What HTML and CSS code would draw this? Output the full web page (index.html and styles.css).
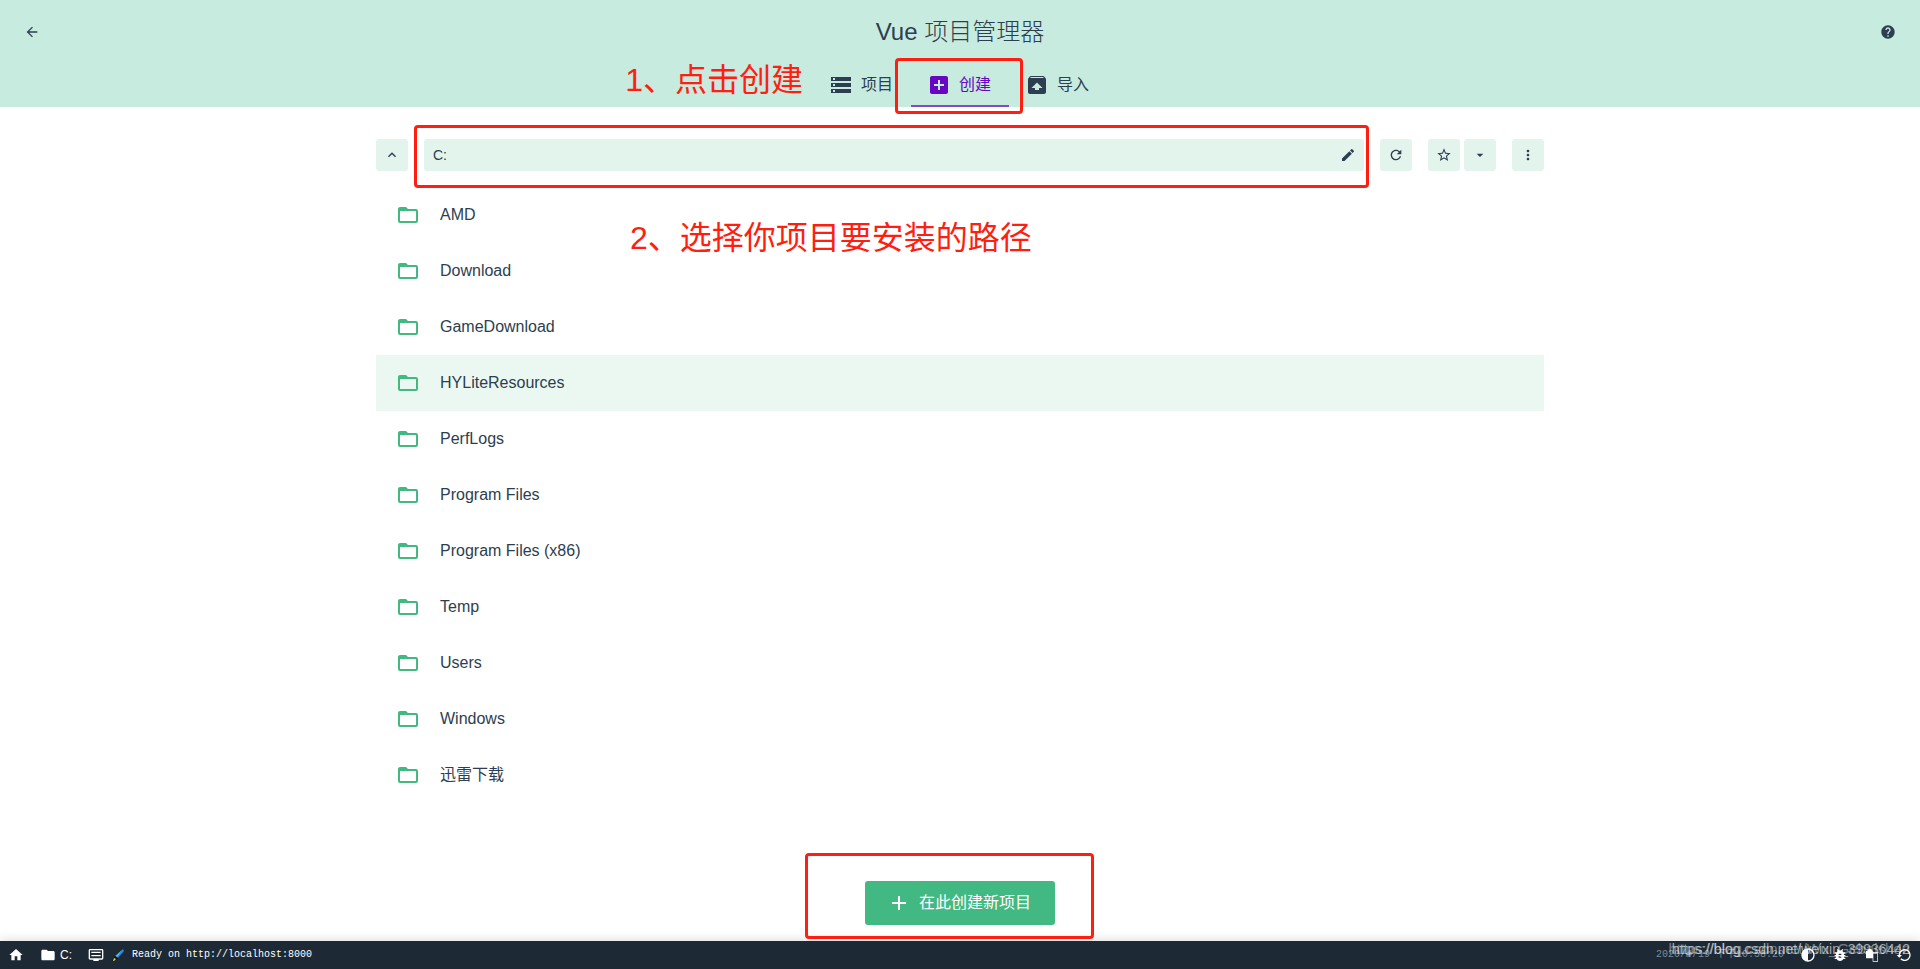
FILE: index.html
```html
<!DOCTYPE html>
<html lang="zh-CN">
<head>
<meta charset="utf-8">
<title>Vue 项目管理器</title>
<link rel="stylesheet" href="styles.css">
</head>
<body>
<div class="app">
  <header class="header">
    <div class="header-top">
      <button class="icon-button" type="button" aria-label="返回"><svg class="icon-small" viewBox="0 0 24 24"><path d="M20 11H7.83l5.59-5.59L12 4l-8 8 8 8 1.41-1.41L7.83 13H20v-2z"/></svg></button>
      <h1 class="title">Vue 项目管理器</h1>
      <button class="icon-button" type="button" aria-label="帮助"><svg class="icon-small" viewBox="0 0 24 24"><path d="M12 2C6.48 2 2 6.48 2 12s4.48 10 10 10 10-4.48 10-10S17.52 2 12 2zm1 17h-2v-2h2v2zm2.07-7.75l-.9.92C13.45 12.9 13 13.5 13 15h-2v-.5c0-1.1.45-2.1 1.17-2.83l1.24-1.26c.37-.36.59-.86.59-1.41 0-1.1-.9-2-2-2s-2 .9-2 2H8c0-2.21 1.79-4 4-4s4 1.79 4 4c0 .88-.36 1.68-.93 2.25z"/></svg></button>
    </div>
    <nav class="tabs">
      <span class="note note-create">1、点击创建</span>
      <a class="tab" href="#projects"><svg class="icon" viewBox="0 0 24 24"><path d="M2 20h20v-4H2v4zm2-3h2v2H4v-2zM2 4v4h20V4H2zm4 3H4V5h2v2zm-4 7h20v-4H2v4zm2-3h2v2H4v-2z"/></svg>项目</a>
      <a class="tab tab-active" href="#create"><svg class="icon" viewBox="0 0 24 24"><path d="M19 3H5c-1.110 0-2 .9-2 2v14c0 1.100.89 2 2 2h14c1.100 0 2-.9 2-2V5c0-1.100-.9-2-2-2zm-2 10h-4v4h-2v-4H7v-2h4V7h2v4h4v2z"/></svg>创建<span class="mark mark-tab"></span></a>
      <a class="tab" href="#import"><svg class="icon" viewBox="0 0 24 24"><path d="M20.550 5.220l-1.390-1.680C18.880 3.210 18.470 3 18 3H6c-.47 0-.88.210-1.150.550L3.460 5.220C3.170 5.570 3 6.010 3 6.500V19c0 1.100.89 2 2 2h14c1.100 0 2-.9 2-2V6.500c0-.49-.17-.93-.45-1.280zM12 9.500l5.500 5.500H14v2h-4v-2H6.500L12 9.500zM5.120 5l.82-1h12l.93 1H5.120z"/></svg>导入</a>
    </nav>
  </header>

  <main class="content">
    <div class="toolbar">
      <button class="tool" type="button" aria-label="上级目录"><svg class="icon-small" viewBox="0 0 24 24"><path d="M12 8l-6 6 1.410 1.410L12 10.830l4.590 4.580L18 14z"/></svg></button>
      <div class="path">
        <input class="path-input" type="text" value="C:" aria-label="路径">
        <button class="path-edit" type="button" aria-label="编辑路径"><svg class="icon-small" viewBox="0 0 24 24"><path d="M3 17.250V21h3.750L17.810 9.940l-3.750-3.750L3 17.250zM20.710 7.040c.39-.39.39-1.020 0-1.410l-2.340-2.340c-.39-.39-1.020-.39-1.410 0l-1.830 1.830 3.750 3.750 1.830-1.830z"/></svg></button>
        <span class="mark mark-path"></span>
      </div>
      <button class="tool" type="button" aria-label="刷新"><svg class="icon-small" viewBox="0 0 24 24"><path d="M17.650 6.350C16.200 4.900 14.210 4 12 4c-4.420 0-7.990 3.580-7.990 8s3.570 8 7.990 8c3.730 0 6.840-2.550 7.730-6h-2.080c-.82 2.330-3.040 4-5.650 4-3.310 0-6-2.690-6-6s2.690-6 6-6c1.660 0 3.140.69 4.220 1.780L13 11h7V4l-2.350 2.350z"/></svg></button>
      <div class="tool-group">
        <button class="tool" type="button" aria-label="收藏"><svg class="icon-small" viewBox="0 0 24 24"><path d="M22 9.240l-7.190-.62L12 2 9.190 8.630 2 9.240l5.460 4.730L5.820 21 12 17.270 18.180 21l-1.630-7.030L22 9.240zM12 15.400l-3.760 2.270 1-4.280-3.320-2.880 4.380-.38L12 6.100l1.710 4.040 4.380.38-3.320 2.880 1 4.280L12 15.400z"/></svg></button>
        <button class="tool" type="button" aria-label="收藏列表"><svg class="icon-small" viewBox="0 0 24 24"><path d="M7 10l5 5 5-5z"/></svg></button>
      </div>
      <button class="tool" type="button" aria-label="更多"><svg class="icon-small" viewBox="0 0 24 24"><path d="M12 8c1.100 0 2-.9 2-2s-.9-2-2-2-2 .9-2 2 .9 2 2 2zm0 2c-1.100 0-2 .9-2 2s.9 2 2 2 2-.9 2-2-.9-2-2-2zm0 6c-1.100 0-2 .9-2 2s.9 2 2 2 2-.9 2-2-.9-2-2-2z"/></svg></button>
    </div>

    <svg class="defs" aria-hidden="true"><symbol id="folder" viewBox="0 0 24 24"><path d="M20 6h-8l-2-2H4c-1.100 0-1.990.9-1.990 2L2 18c0 1.100.9 2 2 2h16c1.100 0 2-.9 2-2V8c0-1.100-.9-2-2-2zm0 12H4V8h16v10z"/></symbol></svg>
    <div class="folders">
      <ul class="folder-list">
        <li class="folder"><svg class="folder-icon"><use href="#folder"/></svg>AMD</li>
        <li class="folder"><svg class="folder-icon"><use href="#folder"/></svg>Download</li>
        <li class="folder"><svg class="folder-icon"><use href="#folder"/></svg>GameDownload</li>
        <li class="folder folder-hover"><svg class="folder-icon"><use href="#folder"/></svg>HYLiteResources</li>
        <li class="folder"><svg class="folder-icon"><use href="#folder"/></svg>PerfLogs</li>
        <li class="folder"><svg class="folder-icon"><use href="#folder"/></svg>Program Files</li>
        <li class="folder"><svg class="folder-icon"><use href="#folder"/></svg>Program Files (x86)</li>
        <li class="folder"><svg class="folder-icon"><use href="#folder"/></svg>Temp</li>
        <li class="folder"><svg class="folder-icon"><use href="#folder"/></svg>Users</li>
        <li class="folder"><svg class="folder-icon"><use href="#folder"/></svg>Windows</li>
        <li class="folder"><svg class="folder-icon"><use href="#folder"/></svg>迅雷下载</li>
      </ul>
      <span class="note note-path">2、选择你项目要安装的路径</span>
    </div>
    <div class="actions">
      <div class="create-wrap">
        <button class="create" type="button"><svg class="icon" viewBox="0 0 24 24"><path d="M19 13h-6v6h-2v-6H5v-2h6V5h2v6h6v2z"/></svg>在此创建新项目</button>
        <span class="mark mark-create"></span>
      </div>
    </div>
  </main>

  <footer class="status">
    <div class="status-group">
      <svg class="icon-small" viewBox="0 0 24 24"><path d="M10 20v-6h4v6h5v-8h3L12 3 2 12h3v8z"/></svg>
      <span class="status-item"><svg class="icon-small" viewBox="0 0 24 24"><path d="M10 4H4c-1.100 0-2 .9-2 2v12c0 1.100.9 2 2 2h16c1.100 0 2-.9 2-2V8c0-1.100-.9-2-2-2h-8l-2-2z"/></svg>C:</span>
      <span class="status-item status-log"><svg class="icon-small" viewBox="0 0 24 24"><path d="M21 3H3c-1.100 0-2 .9-2 2v12c0 1.100.9 2 2 2h5v2h8v-2h5c1.100 0 2-.9 2-2V5c0-1.100-.9-2-2-2zm0 14H3V5h18v12zM5 7h14v2H5zm0 5h14v2H5z"/></svg>
      <svg class="brush" viewBox="0 0 12 12"><path d="M11 0l1 2-6 7-3-2z" fill="#2488d8"/><path d="M10 1L4 7l1 1z" fill="#7cc4f4"/><path d="M3 7l3 2-3 3H0z" fill="#111"/><path d="M2 9l2 1-2 2H1z" fill="#f5d33d"/></svg>
      <span class="log">Ready on http://localhost:8000</span></span>
    </div>
    <div class="status-group status-right">
      <time class="date">2020/4/19 下午10:58:20</time>
      <svg class="icon-small" viewBox="0 0 24 24"><path d="M12 2a10 10 0 1 0 0 20 10 10 0 0 0 0-20zm0 18V4a8 8 0 0 1 0 16z"/></svg>
      <svg class="icon-small" viewBox="0 0 24 24"><path d="M20 8h-2.800a6 6 0 0 0-1.800-2L17 4.400 15.600 3l-2.200 2.200a6 6 0 0 0-2.800 0L8.400 3 7 4.400 8.600 6a6 6 0 0 0-1.800 2H4v2h2.100L6 12H4v2h2l.1 2H4v2h2.800a6 6 0 0 0 10.400 0H20v-2h-2.100l.1-2h2v-2h-2l-.1-2H20V8zm-6 8h-4v-2h4v2zm0-4h-4v-2h4v2z"/></svg>
      <svg class="icon-small" viewBox="0 0 24 24"><path d="M12.900 6c-.5-1.700-2-3-3.900-3a4 4 0 0 0-3.900 3H3v11h10v5h8V8h-8z"/><path d="M14 9h6v12h-6z" fill="#1d2935"/></svg>
      <svg class="icon-small" viewBox="0 0 24 24"><path d="M13 3a9 9 0 0 0-9 9H1l4 4 4-4H6a7 7 0 1 1 2 5l-1.400 1.400A9 9 0 1 0 13 3z"/></svg>
      <span class="watermark watermark-back">https://blog.csdn.net/Wu_Gebaishen</span>
      <span class="watermark">https://blog.csdn.net/weixin_39936442</span>
    </div>
  </footer>
</div>
</body>
</html>
```
FILE: styles.css
```css
* { box-sizing: border-box; }
body {
  margin: 0;
  color: #2c3e50;
  background: #fff;
  font: 16px/24px "Liberation Sans", "Noto Sans CJK SC", sans-serif;
}
button, input { font: inherit; color: inherit; border: 0; padding: 0; background: none; }
svg { display: block; flex: none; fill: currentColor; }
.app { min-height: 100vh; display: flex; flex-direction: column; }
.icon { width: 24px; height: 24px; }
.icon-small { width: 16px; height: 16px; }
.defs { width: 0; height: 0; position: absolute; }

.header { background: #c7ebdf; }
.header-top { display: flex; align-items: center; justify-content: space-between; padding: 16px 16px 0; }
.icon-button { width: 32px; height: 32px; display: grid; place-items: center; }
.title { margin: 0; font-size: 24px; line-height: 32px; font-weight: 300; }
.tabs { position: relative; display: flex; justify-content: center; padding-top: 16px; }
.tab {
  position: relative;
  display: flex;
  align-items: center;
  gap: 8px;
  height: 43px;
  padding: 0 18px 2px 16px;
  color: inherit;
  text-decoration: none;
}
.tab-active { color: #6806c1; box-shadow: inset 0 -2px #7f4bcb; }

.mark { position: absolute; border: 3px solid #ff1e10; border-radius: 4px; pointer-events: none; }
.mark-tab { inset: -6px -14px -7px -16px; }
.mark-path { inset: -14px -5px -17px -10px; }
.mark-create { inset: -28px -39px -14px -60px; }
.note { position: absolute; color: #ff1e10; font-size: 32px; line-height: 40px; white-space: nowrap; }
.note-create { right: calc(50% + 157px); top: 12px; }
.note-path { left: 254px; top: 47px; }

.content { flex: 1; display: flex; flex-direction: column; width: 100%; max-width: 1200px; margin: 0 auto; padding: 32px 16px 16px; }
.toolbar { display: flex; gap: 16px; }
.tool { width: 32px; height: 32px; display: grid; place-items: center; background: #e3f4ed; border-radius: 3px; }
.tool-group { display: flex; gap: 4px; }
.path { position: relative; flex: 1; display: flex; background: #e3f4ed; border-radius: 3px; }
.path-input { flex: 1; min-width: 0; padding: 0 9px; font-size: 14px; }
.path-edit { width: 32px; display: grid; place-items: center; }
.folders { position: relative; flex: 1; padding-top: 16px; }
.folder-list { margin: 0; padding: 0; list-style: none; }
.folder { display: flex; align-items: center; gap: 20px; height: 56px; padding: 0 20px; }
.folder-hover { background: #ebf8f2; }
.folder-icon { width: 24px; height: 24px; color: #42b983; }
.actions { display: flex; justify-content: center; }
.create-wrap { position: relative; }
.create { display: flex; align-items: center; gap: 8px; height: 44px; padding: 0 24px 0 22px; color: #fff; background: #42b983; border-radius: 3px; }

.status {
  display: flex;
  justify-content: space-between;
  height: 28px;
  color: #fff;
  background: #1d2935;
  font-size: 12px;
  line-height: 16px;
  box-shadow: 0 -2px 10px rgba(0, 0, 0, .12);
}
.status-group { display: flex; align-items: center; gap: 16px; padding: 0 8px; }
.status-item { display: flex; align-items: center; gap: 4px; }
.status-log { gap: 8px; }
.brush { width: 12px; height: 12px; }
.log, .date { font-family: "Liberation Mono", "Noto Sans CJK SC", monospace; font-size: 10px; }
.status-right { position: relative; }
.date { color: #828990; }
.watermark { position: absolute; right: 10px; top: 0; font-size: 14px; line-height: 16px; color: rgba(255, 255, 255, .6); white-space: nowrap; }
.watermark-back { font-size: 15px; color: rgba(255, 255, 255, .4); }
```
